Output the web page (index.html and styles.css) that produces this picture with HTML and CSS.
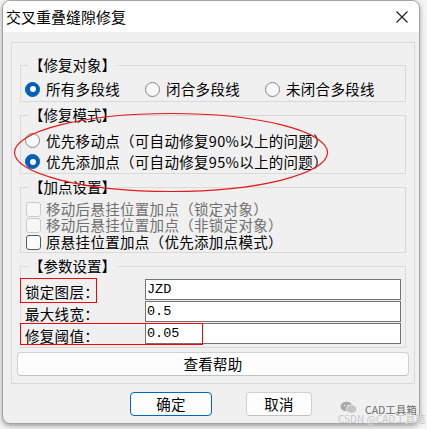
FILE: index.html
```html
<!DOCTYPE html>
<html lang="zh-CN">
<head>
<meta charset="utf-8">
<title>交叉重叠缝隙修复</title>
<link rel="stylesheet" href="styles.css">
</head>
<body>
<div class="window">
  <div class="titlebar">
    <span class="title">交叉重叠缝隙修复</span>
    <svg class="close" width="12" height="12" viewBox="0 0 12 12"><path d="M0.5 0.5 L11.5 11.5 M11.5 0.5 L0.5 11.5" stroke="#1b1b1b" stroke-width="1.1" fill="none"/></svg>
  </div>
  <div class="client">
    <div class="outer">
      <fieldset class="group g1">
        <legend>【修复对象】</legend>
        <div class="row3">
          <div class="opt"><span class="radio on"></span>所有多段线</div>
          <div class="opt"><span class="radio"></span>闭合多段线</div>
          <div class="opt"><span class="radio"></span>未闭合多段线</div>
        </div>
      </fieldset>
      <fieldset class="group g2">
        <legend>【修复模式】</legend>
        <div class="opt mode"><span class="radio"></span>优先移动点（可自动修复90%以上的问题）</div>
        <div class="opt mode"><span class="radio on"></span>优先添加点（可自动修复95%以上的问题）</div>
      </fieldset>
      <fieldset class="group g3">
        <legend>【加点设置】</legend>
        <div class="opt chk c1 disabled"><span class="check"></span>移动后悬挂位置加点（锁定对象）</div>
        <div class="opt chk c2 disabled"><span class="check"></span>移动后悬挂位置加点（非锁定对象）</div>
        <div class="opt chk c3"><span class="check"></span>原悬挂位置加点（优先添加点模式）</div>
      </fieldset>
      <fieldset class="group g4">
        <legend>【参数设置】</legend>
        <div class="param"><span class="plabel">锁定图层：</span><input class="pinput" type="text" value="JZD" readonly></div>
        <div class="param"><span class="plabel">最大线宽：</span><input class="pinput" type="text" value="0.5" readonly></div>
        <div class="param"><span class="plabel">修复阈值：</span><input class="pinput" type="text" value="0.05" readonly></div>
      </fieldset>
      <button class="btn help" type="button">查看帮助</button>
    </div>
    <div class="footer">
      <button class="btn ok" type="button">确定</button>
      <button class="btn cancel" type="button">取消</button>
    </div>
  </div>
  <svg class="mark-ellipse" width="316" height="81" viewBox="0 0 316 81"><ellipse cx="158" cy="40.5" rx="156.5" ry="39" fill="none" stroke="#e81818" stroke-width="1.2"/></svg>
  <div class="mark-box b1"></div>
  <div class="mark-box b2"></div>
</div>
<div class="watermark">
  <svg class="wm-icon" width="18" height="13" viewBox="0 0 18 13"><ellipse cx="6.5" cy="5.5" rx="6" ry="4.8" fill="#a9a9a9"/><ellipse cx="11.5" cy="8" rx="5.2" ry="4.2" fill="#c4c4c4" stroke="#f0f0f0" stroke-width="0.8"/><circle cx="4.5" cy="4.5" r="0.8" fill="#f0f0f0"/><circle cx="8.3" cy="4.5" r="0.8" fill="#f0f0f0"/></svg>
  <span class="wm1">CAD工具箱</span>
  <span class="wm2">CSDN @CAD工具箱</span>
</div>
</body>
</html>
```
FILE: styles.css
```css
* { box-sizing: border-box; }
html, body { margin: 0; padding: 0; }
body {
  width: 427px;
  height: 429px;
  overflow: hidden;
  position: relative;
  background: #f4f4f4;
  font-family: "Noto Sans CJK SC", "Noto Sans", sans-serif;
  font-size: 14.5px;
  letter-spacing: 0.3px;
  color: #000;
}
.window {
  position: relative;
  margin-left: 2px;
  width: 418px;
  height: 424px;
  border: 1px solid #a3a3a3;
  border-radius: 8px;
  background: #f0f0f0;
  overflow: hidden;
  box-shadow: 0 2px 5px rgba(0, 0, 0, 0.35);
}
.titlebar {
  height: 31px;
  background: #fff;
  display: flex;
  align-items: center;
  justify-content: space-between;
  padding: 0 11px 0 3px;
}
.title { font-size: 15px; line-height: 20px; letter-spacing: 0; }
.close { display: block; }
.client { padding: 10px 0 0 8px; }
.outer {
  width: 404px;
  border: 1px solid #d9d9d9;
  padding: 12px 0 7px 5px;
}
.group {
  margin: 0 0 0 3px;
  width: 386px;
  min-width: 0;
  border: 1px solid #d9d9d9;
  padding: 0 0 0 4px;
}
.group + .group { margin-top: 3px; }
legend {
  margin-left: 3px;
  padding: 0 1px;
  line-height: 20px;
  height: 20px;
  letter-spacing: 0;
}
.g1 { padding-top: 4px; padding-bottom: 2px; }
.g2 { padding-top: 5px; padding-bottom: 1px; }
.g3 { padding-top: 4px; padding-bottom: 1px; }
.g4 { padding-top: 3px; padding-bottom: 2px; }
.row3 {
  display: grid;
  grid-template-columns: 120px 120px 120px;
  height: 20px;
}
.opt {
  display: flex;
  align-items: center;
  gap: 6px;
  line-height: 20px;
  white-space: nowrap;
}
.mode { height: 21px; }
.radio {
  width: 15px;
  height: 15px;
  border-radius: 50%;
  border: 1px solid #868686;
  background: #f8f8f8;
  display: flex;
  align-items: center;
  justify-content: center;
  flex: none;
}
.radio.on { background: #005fb8; border-color: #005fb8; }
.radio.on::after {
  content: "";
  width: 6px;
  height: 6px;
  border-radius: 50%;
  background: #fff;
}
.chk { gap: 5px; }
.c1, .c2 { height: 16px; line-height: 16px; }
.c3 { height: 18px; line-height: 18px; }
.check {
  margin-left: 1px;
  width: 15px;
  height: 15px;
  border-radius: 3px;
  border: 1px solid #5c5c5c;
  background: #fbfbfb;
  flex: none;
}
.disabled { color: #6f6f6f; }
.disabled .check { border-color: #cbcbcb; background: #f7f7f7; }
.param {
  display: flex;
  height: 22px;
}
.plabel {
  width: 120px;
  flex: none;
  padding-top: 4px;
  line-height: 18px;
}
.pinput {
  width: 256px;
  height: 21px;
  margin: 0;
  border: 1px solid #737373;
  background: #fff;
  padding: 0 0 0 1px;
  font-family: "Liberation Mono", "DejaVu Sans Mono", monospace;
  font-size: 13.5px;
  letter-spacing: 0;
  color: #000;
  outline: none;
}
.btn {
  display: block;
  margin: 0;
  height: 24px;
  background: #fdfdfd;
  border: 1px solid #d0d0d0;
  border-bottom-color: #c2c2c2;
  border-radius: 4px;
  font-family: "Noto Sans CJK SC", "Noto Sans", sans-serif;
  font-size: 14.5px;
  letter-spacing: 0.3px;
  line-height: 20px;
  color: #000;
  padding: 0;
}
.help { width: 392px; margin-top: 4px; }
.footer {
  display: flex;
  gap: 34px;
  padding: 8px 0 0 119px;
}
.ok { width: 82px; border: 1px solid #0067c0; }
.cancel { width: 66px; }
.mark-ellipse { position: absolute; left: 10px; top: 111px; }
.mark-box { position: absolute; border: 1px solid #ff0000; }
.b1 { left: 17px; top: 277px; width: 77px; height: 25px; }
.b2 { left: 17px; top: 322px; width: 183px; height: 22px; }
.watermark { position: absolute; left: 0; top: 0; letter-spacing: 0; }
.wm-icon { position: absolute; left: 340px; top: 401px; }
.wm1 {
  position: absolute;
  left: 365px;
  top: 404px;
  font-size: 10.5px;
  line-height: 12px;
  color: #6a6a6a;
  white-space: nowrap;
}
.wm2 {
  position: absolute;
  left: 338px;
  top: 413px;
  font-size: 10px;
  line-height: 11px;
  color: #c3c3c3;
  white-space: nowrap;
  text-shadow: 0 0 1px #fff;
}
```
